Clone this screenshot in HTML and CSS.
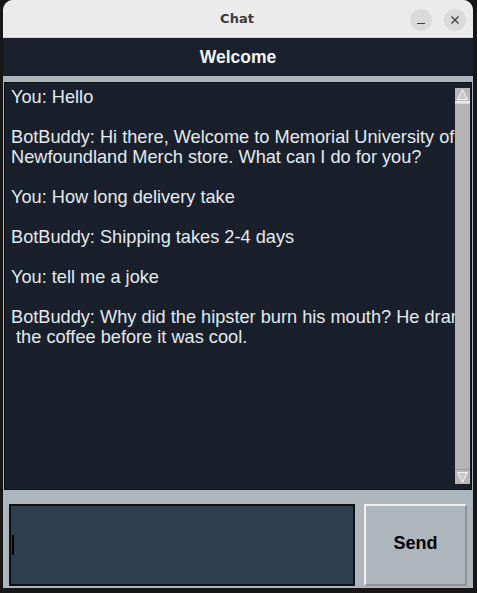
FILE: index.html
```html
<!DOCTYPE html>
<html>
<head>
<meta charset="utf-8">
<link rel="stylesheet" href="styles.css">
</head>
<body>
<div class="window">
  <div class="titlebar">
    <span class="title">Chat</span>
    <div class="controls">
      <span class="ctl"><svg width="10" height="10" viewBox="0 0 10 10"><path d="M1 8.5H9" stroke="#3d3d3d" stroke-width="1.2"/></svg></span>
      <span class="ctl"><svg width="10" height="10" viewBox="0 0 10 10"><path d="M1.5 1.5L8.5 8.5M8.5 1.5L1.5 8.5" stroke="#3d3d3d" stroke-width="1.3"/></svg></span>
    </div>
  </div>
  <div class="header">Welcome</div>
  <div class="strip"></div>
  <div class="chat">
    <div class="log">You: Hello

BotBuddy: Hi there, Welcome to Memorial University of
Newfoundland Merch store. What can I do for you?

You: How long delivery take

BotBuddy: Shipping takes 2-4 days

You: tell me a joke

BotBuddy: Why did the hipster burn his mouth? He drank
 the coffee before it was cool.</div>
    <div class="scrollbar">
      <div class="arrow up"><svg width="13" height="13" viewBox="0 0 13 13"><path d="M6.5 1.5L11.5 11.5H1.5Z" fill="#c8c8c8" stroke="#f4f4f4" stroke-width="1"/></svg></div>
      <div class="thumb"></div>
      <div class="arrow down"><svg width="13" height="13" viewBox="0 0 13 13"><path d="M6.5 11.5L11.5 1.5H1.5Z" fill="#c8c8c8" stroke="#f4f4f4" stroke-width="1"/></svg></div>
    </div>
  </div>
  <div class="inputbar">
    <div class="entry"><span class="caret"></span></div>
    <div class="send">Send</div>
  </div>
</div>
</body>
</html>
```
FILE: styles.css
```css
html, body {
  margin: 0;
  padding: 0;
  background: #171717;
  width: 477px;
  height: 593px;
  overflow: hidden;
}
.window {
  margin-left: 3px;
  width: 470px;
  height: 588px;
  background: #adb5bd;
  display: flex;
  flex-direction: column;
  border-radius: 10px 10px 0 0;
  overflow: hidden;
}
.titlebar {
  height: 37px;
  flex: 0 0 37px;
  background: #ebebeb;
  border-bottom: 1px solid #cfcfcf;
  position: relative;
  display: flex;
  align-items: center;
  justify-content: center;
}
.title {
  font-family: "DejaVu Sans", sans-serif;
  font-weight: bold;
  font-size: 13px;
  color: #3d3d3d;
  margin-left: -2px;
}
.controls {
  position: absolute;
  right: 7px;
  top: 9px;
  display: flex;
  gap: 12px;
}
.ctl {
  width: 22px;
  height: 22px;
  border-radius: 50%;
  background: #dadada;
  display: flex;
  align-items: center;
  justify-content: center;
}
.header {
  flex: 0 0 38px;
  background: #1b212c;
  color: #f2f5f8;
  font-family: "Liberation Sans", Arial, sans-serif;
  font-weight: bold;
  font-size: 17.5px;
  display: flex;
  align-items: center;
  justify-content: center;
}
.strip {
  flex: 0 0 6px;
}
.chat {
  flex: 0 0 408px;
  margin: 0 1px;
  box-sizing: border-box;
  border: 1px solid #0c0f14;
  background: #19202b;
  display: flex;
  position: relative;
}
.log {
  flex: 1;
  padding: 4px 0 0 6px;
  margin-right: 16px;
  overflow: hidden;
  white-space: pre;
  font-family: "Liberation Sans", Arial, sans-serif;
  font-size: 18.2px;
  line-height: 20px;
  color: #e4eaf0;
}
.scrollbar {
  position: absolute;
  right: 1px;
  top: 5px;
  bottom: 5px;
  width: 15px;
  background: #b4b4b4;
  display: flex;
  flex-direction: column;
}
.arrow {
  flex: 0 0 15px;
  display: flex;
  align-items: center;
  justify-content: center;
  background: #b8b8b8;
  box-sizing: border-box;
}
.arrow.up { border-bottom: 2px solid #e8e8e8; }
.arrow.down { border-top: 1px solid #9a9a9a; }
.thumb {
  flex: 1;
  background: #b4b4b4;
  border-top: 1px solid #d8d8d8;
}
.inputbar {
  flex: 1;
  display: flex;
  padding: 14px 6px 2px 6px;
  gap: 9px;
}
.entry {
  flex: 0 0 346px;
  box-sizing: border-box;
  background: #2c3e50;
  border: 2px solid #0d1015;
  display: flex;
  align-items: center;
  padding-left: 1px;
}
.caret {
  width: 2px;
  height: 20px;
  background: #000;
}
.send {
  flex: 1;
  box-sizing: border-box;
  border: 2px solid;
  border-color: #eef0f2 #8e949a #8e949a #eef0f2;
  background: #adb5bd;
  display: flex;
  align-items: center;
  justify-content: center;
  font-family: "Liberation Sans", Arial, sans-serif;
  font-weight: bold;
  font-size: 18px;
  color: #000;
  padding-bottom: 4px;
}
```
